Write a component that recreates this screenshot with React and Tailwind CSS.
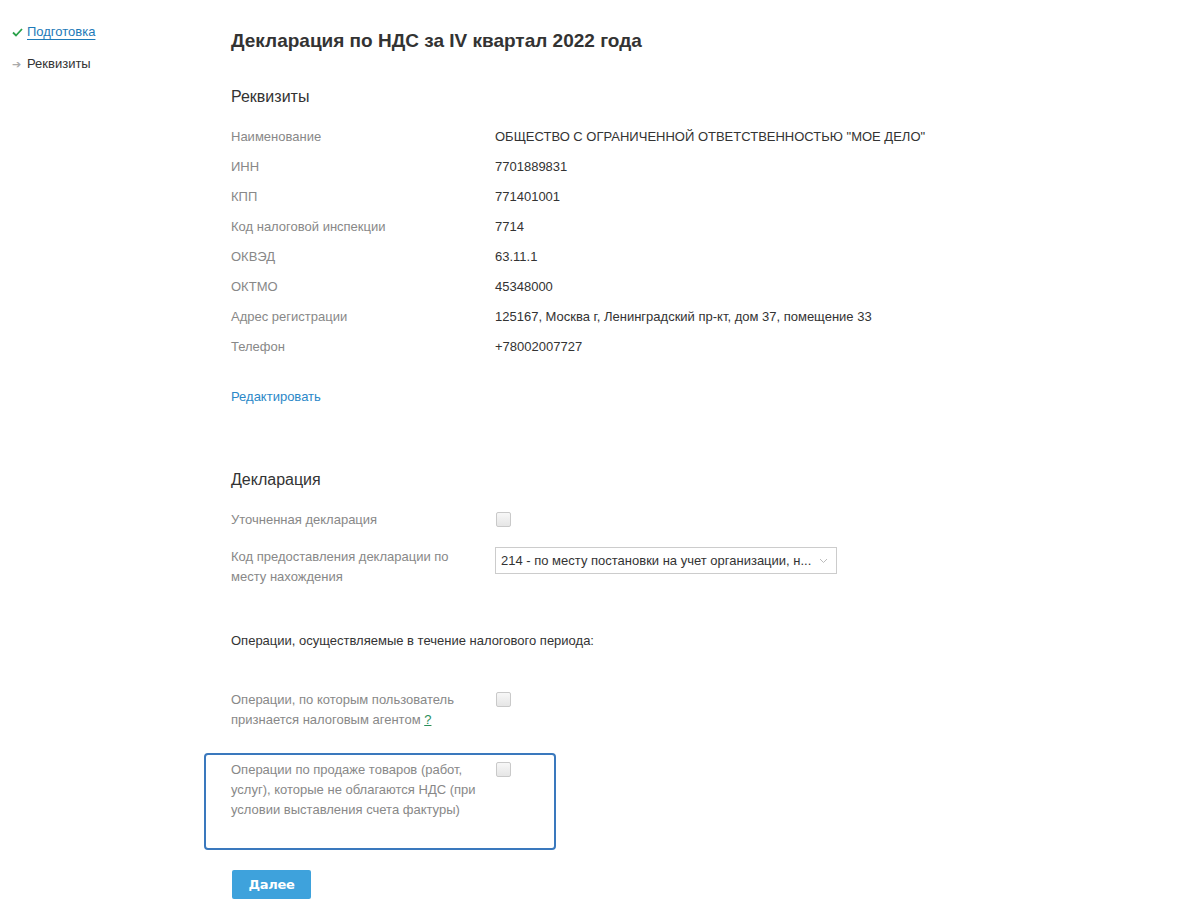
import React from 'react';

const Checkbox = () => (
  <span className="block w-[15px] h-[15px] rounded-[2px] border border-[#c9c9c9] bg-gradient-to-b from-[#f7f7f7] to-[#e6e6e6]" />
);

const rows = [
  ['Наименование', 'ОБЩЕСТВО С ОГРАНИЧЕННОЙ ОТВЕТСТВЕННОСТЬЮ "МОЕ ДЕЛО"'],
  ['ИНН', '7701889831'],
  ['КПП', '771401001'],
  ['Код налоговой инспекции', '7714'],
  ['ОКВЭД', '63.11.1'],
  ['ОКТМО', '45348000'],
  ['Адрес регистрации', '125167, Москва г, Ленинградский пр-кт, дом 37, помещение 33'],
  ['Телефон', '+78002007727'],
];

export default function App() {
  return (
    <div className="min-h-[909px] bg-white flex font-['Liberation_Sans',Arial,sans-serif] text-[13px] text-[#333]">
      {/* Sidebar */}
      <div className="w-[231px] shrink-0 pl-[12px] pt-[22px]">
        <div className="flex items-center h-[20px]">
          <svg width="11" height="9" viewBox="0 0 11 9" className="mr-[4px]">
            <path d="M1 4.5 L4 7.5 L10 1" stroke="#2aa14a" strokeWidth="1.8" fill="none" />
          </svg>
          <a href="#" className="text-[#1e7ab8] underline underline-offset-[3px] decoration-[#1e7ab8]">Подготовка</a>
        </div>
        <div className="flex items-center h-[20px] mt-[12px]">
          <span className="text-[#aaa] text-[11px] w-[15px]">➔</span>
          <span className="text-[#333]">Реквизиты</span>
        </div>
      </div>

      {/* Main */}
      <div className="flex-1 pt-[27px]">
        <h1 className="text-[19px] leading-[28px] font-bold text-[#333]">Декларация по НДС за IV квартал 2022 года</h1>

        <h2 className="mt-[32px] text-[16px] leading-[20px] text-[#333]">Реквизиты</h2>

        <div className="mt-[15px]">
          {rows.map(([k, v]) => (
            <div key={k} className="flex h-[30px] items-center">
              <div className="w-[264px] text-[#888]">{k}</div>
              <div className="text-[#333]">{v}</div>
            </div>
          ))}
        </div>

        <a href="#" className="block mt-[25px] leading-[20px] text-[#2b88c8]">Редактировать</a>

        <h2 className="mt-[63px] text-[16px] leading-[20px] text-[#333]">Декларация</h2>

        <div className="flex mt-[20px] leading-[20px]">
          <div className="w-[265px] text-[#888]">Уточненная декларация</div>
          <div className="pt-[2px]"><Checkbox /></div>
        </div>

        <div className="flex mt-[17px] leading-[20px]">
          <div className="w-[264px] text-[#888]">
            Код предоставления декларации по<br />месту нахождения
          </div>
          <div className="w-[342px] h-[27px] border border-[#ccc] flex items-center pl-[5px] pr-[8px] justify-between">
            <span className="text-[#333]">214 - по месту постановки на учет организации, н...</span>
            <svg width="9" height="6" viewBox="0 0 9 6">
              <path d="M1 1 L4.5 4.5 L8 1" stroke="#bbb" strokeWidth="1" fill="none" />
            </svg>
          </div>
        </div>

        <div className="mt-[44px] leading-[20px] text-[#333]">Операции, осуществляемые в течение налогового периода:</div>

        <div className="flex mt-[39px] leading-[20px]">
          <div className="w-[265px] text-[#888]">
            Операции, по которым пользователь<br />признается налоговым агентом{' '}
            <a href="#" className="text-[#2a8f5a] underline">?</a>
          </div>
          <div className="pt-[2px]"><Checkbox /></div>
        </div>

        <div className="mt-[23px] -ml-[27px] w-[352px] h-[97px] border-[2.5px] border-[#3a78bd] rounded-[4px] pl-[25px] pt-[5px] flex leading-[20px]">
          <div className="w-[265px] text-[#888]">
            Операции по продаже товаров (работ,<br />услуг), которые не облагаются НДС (при<br />условии выставления счета фактуры)
          </div>
          <div className="pt-[2px]"><Checkbox /></div>
        </div>

        <button className="mt-[20px] ml-[1px] w-[79px] h-[29px] rounded-[2px] bg-[#3ea2dc] text-white font-bold text-[13px] font-['DejaVu_Sans',sans-serif] tracking-[-0.3px]">Далее</button>
      </div>
    </div>
  );
}
